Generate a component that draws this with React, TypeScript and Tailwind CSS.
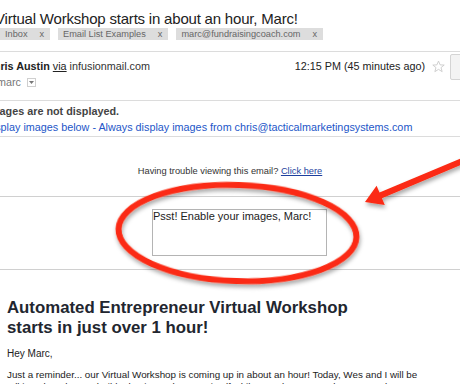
import { FC } from "react";

const labels = ["Inbox", "Email List Examples", "marc@fundraisingcoach.com"];

const Annotation: FC = () => (
  <svg
    className="absolute left-0 top-0 pointer-events-none"
    width="460"
    height="384"
    viewBox="0 0 460 384"
  >
    <defs>
      <filter id="shadow" x="-20%" y="-20%" width="140%" height="160%">
        <feDropShadow dx="1" dy="3" stdDeviation="2" floodColor="#000" floodOpacity="0.35" />
      </filter>
    </defs>
    <ellipse
      cx="237.5"
      cy="233"
      rx="119"
      ry="48"
      fill="none"
      stroke="#fb2b12"
      strokeWidth="6"
      transform="rotate(2 237.5 233)"
      filter="url(#shadow)"
    />
    <polygon
      points="365,202 376.6,185.7 379.5,192.6 468.8,155 471.2,160.6 381.9,198.2 384.8,205.1"
      fill="#fb2b12"
      filter="url(#shadow)"
    />
  </svg>
);

export default function App() {
  return (
    <div className="relative w-[460px] h-[384px] overflow-hidden bg-white font-['Liberation_Sans',Arial,sans-serif] text-[#222]">
      {/* subject */}
      <div className="pt-[10px] -ml-[5px] text-[15px] leading-[18px] tracking-[-0.2px] whitespace-nowrap">
        Virtual Workshop starts in about an hour, Marc!
      </div>
      <div className="flex gap-[8px] h-[12px]">
        {labels.map((l) => (
          <div
            key={l}
            className="flex bg-[#dddddd] text-[#666] text-[9.2px] leading-[12px] pl-[5px] pr-[6px] gap-[12px] whitespace-nowrap"
          >
            <span>{l}</span>
            <span>x</span>
          </div>
        ))}
      </div>
      <div className="mt-[11px] h-px bg-[#dcdcdc]" />

      {/* sender */}
      <div className="flex justify-between h-[48px] text-[10.8px] leading-[14px] whitespace-nowrap">
        <div className="pt-[7px]">
          <div className="-ml-[14px]">
            <span className="font-bold">Chris Austin</span>{" "}
            <span className="underline">via</span>{" "}
            <span className="text-[#333]">infusionmail.com</span>
          </div>
          <div className="mt-[2px] -ml-[15px] flex items-center text-[#777]">
            <span>to marc</span>
            <span className="ml-[6px] w-[9px] h-[9px] border border-[#cfcfcf] flex items-center justify-center">
              <svg width="5" height="3" viewBox="0 0 5 3">
                <polygon points="0,0 5,0 2.5,3" fill="#777" />
              </svg>
            </span>
          </div>
        </div>
        <div className="flex items-start">
          <div className="pt-[7px] flex items-center">
            <span>12:15 PM (45 minutes ago)</span>
            <svg className="ml-[7px]" width="13" height="13" viewBox="0 0 24 24">
              <polygon
                points="12,2 15,9 22.5,9.3 16.7,14 18.7,21.5 12,17.3 5.3,21.5 7.3,14 1.5,9.3 9,9"
                fill="none"
                stroke="#c9c9c9"
                strokeWidth="1.6"
                strokeLinejoin="round"
              />
            </svg>
          </div>
          <div className="ml-[5px] -mr-[16px] mt-[2px] w-[26px] h-[26px] rounded-[2px] border border-[#d4d4d4] bg-[#f3f3f3]" />
        </div>
      </div>
      <div className="h-px bg-[#dcdcdc]" />

      {/* images notice */}
      <div className="pt-[3px] pb-[2px] text-[10.8px] leading-[14px] whitespace-nowrap">
        <div className="-ml-[13px] font-bold text-[#444]">Images are not displayed.</div>
        <div className="mt-[2px] -ml-[15px] text-[#2356c8]">
          Display images below - Always display images from chris@tacticalmarketingsystems.com
        </div>
      </div>
      <div className="h-px bg-[#dcdcdc]" />

      {/* email body */}
      <div className="pt-[28px] text-center text-[9.3px] leading-[12px] text-[#333]">
        Having trouble viewing this email?{" "}
        <span className="text-[#1d3f9e] underline">Click here</span>
      </div>
      <div className="mt-[19px] h-px bg-[#d0d0d0]" />
      <div className="mt-[12px] ml-[152px] w-[175px] h-[47px] border border-[#b4b4b4] text-[11px] leading-[13px] whitespace-nowrap">
        Psst! Enable your images, Marc!
      </div>
      <div className="mt-[13px] h-px bg-[#d0d0d0]" />

      <div className="px-[7px]">
        <h1 className="pt-[28px] text-[16.8px] leading-[20px] font-bold text-[#22262f] whitespace-nowrap">
          Automated Entrepreneur Virtual Workshop
          <br />
          starts in just over 1 hour!
        </h1>
        <p className="mt-[10px] text-[10px] leading-[12px]">Hey Marc,</p>
        <p className="mt-[9px] text-[9.8px] leading-[12px] whitespace-nowrap">
          Just a reminder... our Virtual Workshop is coming up in about an hour! Today, Wes and I will be
          <br />
          talking about how to build a business that runs itself while you sleep, so grab a seat early.
        </p>
      </div>

      <Annotation />
    </div>
  );
}
